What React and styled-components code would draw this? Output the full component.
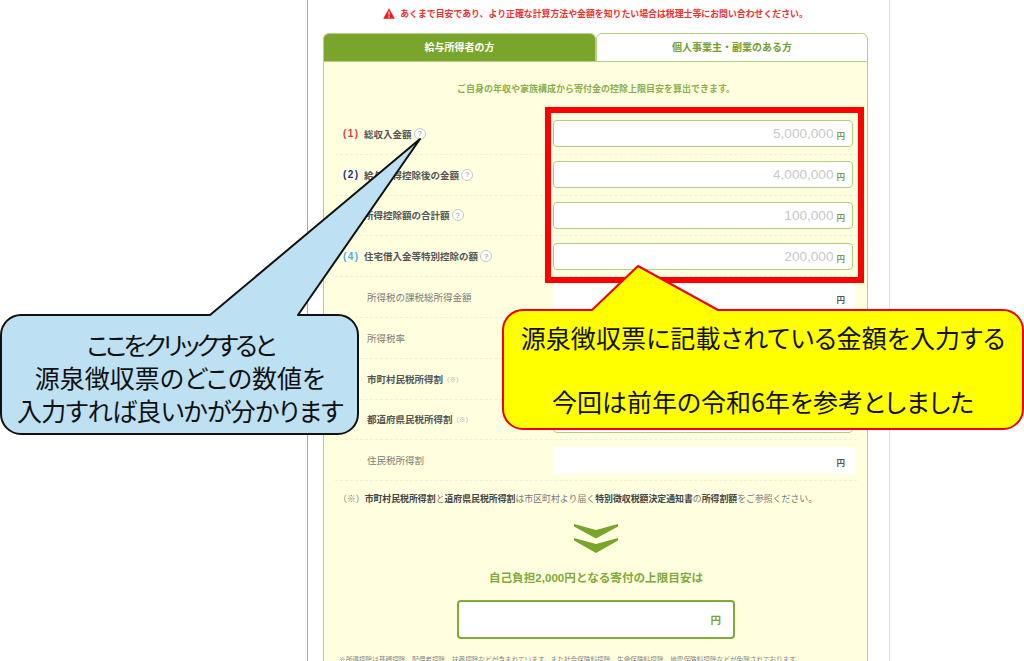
import React from "react";
import styled, { createGlobalStyle } from "styled-components";

const GlobalStyle = createGlobalStyle`
  html, body {
    margin: 0;
    padding: 0;
    background: #fff;
  }
  body {
    font-family: "Liberation Sans", "Noto Sans CJK JP", sans-serif;
  }
`;

const Page = styled.div`
  position: relative;
  width: 1024px;
  height: 661px;
  overflow: hidden;
  background: #fff;
`;

const Sheet = styled.div`
  box-sizing: border-box;
  width: 583px;
  height: 661px;
  margin-left: 307px;
  padding: 0 21px 0 15px;
  border-left: 1px solid #a8a8a8;
  border-right: 1px solid #e2e2e2;
  overflow: hidden;
`;

const Notice = styled.p`
  display: flex;
  align-items: center;
  justify-content: center;
  gap: 5px;
  height: 26px;
  margin: 0 0 7px;
  color: #f03030;
  font-size: 8.9px;
  font-weight: 700;
  white-space: nowrap;
`;

const Tabs = styled.div`
  display: flex;
  height: 29px;
`;

const Tab = styled.div`
  box-sizing: border-box;
  flex: ${(p) => (p.$active ? "0 0 273px" : "1")};
  display: flex;
  align-items: center;
  justify-content: center;
  padding-bottom: 2px;
  border: 1.5px solid ${(p) => (p.$active ? "#b5d48a" : "#aed080")};
  border-bottom-color: #aed080;
  border-radius: 6px 6px 0 0;
  background: ${(p) => (p.$active ? "#7aa52c" : "#fff")};
  color: ${(p) => (p.$active ? "#fff" : "#76a032")};
  font-size: 10px;
  font-weight: 700;
`;

const Panel = styled.div`
  box-sizing: border-box;
  height: 620px;
  padding: 0 10px 0 11px;
  border: 1.5px solid #aed080;
  border-top: 0;
  background: #ffffe0;
`;

const Intro = styled.p`
  height: 52px;
  margin: 0;
  padding-top: 21px;
  box-sizing: border-box;
  color: #8cae4c;
  font-size: 9px;
  font-weight: 700;
  line-height: 13px;
  text-align: center;
`;

const Row = styled.div`
  box-sizing: border-box;
  display: grid;
  grid-template-columns: 218px 302px;
  align-items: center;
  height: 40.8px;
  border-bottom: 1px dashed #eef3d2;
`;

const Label = styled.div`
  display: flex;
  align-items: center;
  padding-left: ${(p) => (p.$num ? "8px" : "32px")};
  color: ${(p) => (p.$plain ? "#7b7b7b" : "#555")};
  font-size: 9.5px;
  font-weight: ${(p) => (p.$plain ? 400 : 700)};
  white-space: nowrap;
`;

const Num = styled.span`
  width: 21px;
  color: ${(p) => p.$color};
  font-size: 10px;
  font-weight: 700;
  letter-spacing: 1.4px;
`;

const Help = styled.span`
  box-sizing: border-box;
  display: inline-flex;
  align-items: center;
  justify-content: center;
  width: 12px;
  height: 12px;
  margin-left: 2px;
  border: 1.5px solid #c6c6c6;
  border-radius: 50%;
  background: #fff;
  color: #8a8a8a;
  font-size: 7.5px;
  font-weight: 400;
`;

const Small = styled.span`
  color: #aaa;
  font-size: 6.5px;
  font-weight: 400;
`;

const Field = styled.div`
  box-sizing: border-box;
  display: flex;
  align-items: center;
  justify-content: flex-end;
  gap: 3px;
  width: ${(p) => (p.$bare ? "302px" : "300px")};
  height: 27px;
  padding-right: ${(p) => (p.$bare ? "10px" : "7px")};
  border: ${(p) => (p.$bare ? "0" : "1.5px solid #b2cd85")};
  border-radius: ${(p) => (p.$bare ? "0" : "4px")};
  background: #fff;
`;

const Amount = styled.span`
  color: #c8c8c8;
  font-size: 13.6px;
`;

const Yen = styled.span`
  color: ${(p) => (p.$dark ? "#555" : "#7d9c50")};
  font-size: 8.5px;
  font-weight: 700;
  padding-top: 3px;
`;

const Note = styled.p`
  margin: 0;
  padding: 12px 0 0 3px;
  color: #777;
  font-size: 8.9px;
  line-height: 12px;
  white-space: nowrap;

  b {
    color: #444;
  }
`;

const Chevrons = styled.svg`
  display: block;
  width: 44px;
  height: 29px;
  margin: 19px auto 0;
`;

const ResultTitle = styled.h3`
  margin: 18px 0 0;
  color: #80aa3a;
  font-size: 11.6px;
  font-weight: 700;
  line-height: 14px;
  text-align: center;
`;

const ResultBox = styled.div`
  box-sizing: border-box;
  display: flex;
  align-items: center;
  justify-content: flex-end;
  width: 278px;
  height: 39px;
  margin: 15px auto 0;
  padding-right: 12px;
  border: 2px solid #80aa3a;
  border-radius: 4px;
  background: #fff;
  color: #7aa52c;
  font-size: 10.5px;
  font-weight: 700;
`;

const Foot = styled.p`
  margin: 16px 0 0 4px;
  color: #888;
  font-size: 6.65px;
  line-height: 10px;
  white-space: nowrap;
`;

const RedFrame = styled.div`
  position: absolute;
  left: 545px;
  top: 107px;
  box-sizing: border-box;
  width: 319px;
  height: 176px;
  border: 6.5px solid #ff0000;
`;

const Callout = styled.div`
  position: absolute;
  left: 0;
  top: 0;
  width: 1024px;
  height: 661px;
  pointer-events: none;
`;

const Bubble = styled.svg`
  position: absolute;
  left: 0;
  top: 0;
`;

const BubbleText = styled.div`
  position: absolute;
  left: ${(p) => p.$left}px;
  top: ${(p) => p.$top}px;
  width: ${(p) => p.$width}px;
  color: #111;
  font-family: "Noto Sans CJK JP", sans-serif;
  font-size: 25px;
  font-feature-settings: "palt";
  text-align: center;
  white-space: nowrap;
`;

const BubbleLine = styled.div`
  height: ${(p) => p.$height}px;
  line-height: ${(p) => p.$height}px;
  letter-spacing: ${(p) => p.$spacing || 0}px;
`;

const rows = [
  { num: "(1)", color: "#e8383d", label: "総収入金額", help: true, amount: "5,000,000" },
  { num: "(2)", color: "#1d2f8f", label: "給与所得控除後の金額", help: true, amount: "4,000,000" },
  { num: "(3)", color: "#7aa52c", label: "所得控除額の合計額", help: true, amount: "100,000" },
  { num: "(4)", color: "#45b4ea", label: "住宅借入金等特別控除の額", help: true, amount: "200,000" },
  { label: "所得税の課税総所得金額", plain: true, bare: true },
  { label: "所得税率", plain: true, bare: true },
  { label: "市町村民税所得割", small: true },
  { label: "都道府県民税所得割", small: true },
  { label: "住民税所得割", plain: true, bare: true },
];

function Warning() {
  return (
    <svg width="12" height="11" viewBox="0 0 12 11">
      <path d="M6 0.3 L11.8 10.7 H0.2 Z" fill="#f01c1c" />
      <path d="M5.4 3.6 H6.6 L6.4 7.4 H5.6 Z M5.4 8.2 H6.6 V9.4 H5.4 Z" fill="#fff" />
    </svg>
  );
}

export default function App() {
  return (
    <Page>
      <GlobalStyle />
      <Sheet>
        <Notice>
          <Warning />
          あくまで目安であり、より正確な計算方法や金額を知りたい場合は税理士等にお問い合わせください。
        </Notice>
        <Tabs>
          <Tab $active>給与所得者の方</Tab>
          <Tab>個人事業主・副業のある方</Tab>
        </Tabs>
        <Panel>
          <Intro>ご自身の年収や家族構成から寄付金の控除上限目安を算出できます。</Intro>
          {rows.map((r) => (
            <Row key={r.label}>
              <Label $num={!!r.num} $plain={r.plain}>
                {r.num && <Num $color={r.color}>{r.num}</Num>}
                {r.label}
                {r.help && <Help>?</Help>}
                {r.small && <Small>（※）</Small>}
              </Label>
              <Field $bare={r.bare}>
                {r.amount && <Amount>{r.amount}</Amount>}
                <Yen $dark={r.bare}>円</Yen>
              </Field>
            </Row>
          ))}
          <Note>
            （※）<b>市町村民税所得割</b>と<b>道府県民税所得割</b>は市区町村より届く
            <b>特別徴収税額決定通知書</b>の<b>所得割額</b>をご参照ください。
          </Note>
          <Chevrons viewBox="0 0 44 29">
            <path d="M0 0 L22 6 L44 0 V2.5 L22 14.5 L0 2.5 Z" fill="#7aa52c" />
            <path d="M0 14 L22 20 L44 14 V16.5 L22 29 L0 16.5 Z" fill="#7aa52c" />
          </Chevrons>
          <ResultTitle>自己負担2,000円となる寄付の上限目安は</ResultTitle>
          <ResultBox>円</ResultBox>
          <Foot>
            ※所得控除は基礎控除、配偶者控除、扶養控除などが含まれています。また社会保険料控除、生命保険料控除、地震保険料控除などが免除されております。
          </Foot>
        </Panel>
      </Sheet>

      <RedFrame />

      <Callout>
        <Bubble width="1024" height="661" viewBox="0 0 1024 661">
          <path
            d="M21 315 H210 L420 139 L298 315 H338 A20 20 0 0 1 358 335 V414 A20 20 0 0 1 338 434 H21 A20 20 0 0 1 1 414 V335 A20 20 0 0 1 21 315 Z"
            fill="#bde0f3"
            stroke="#111"
            strokeWidth="2"
            strokeLinejoin="round"
          />
          <path
            d="M523 310 H592 L638 266 L718 310 H1003 A20 20 0 0 1 1023 330 V409 A20 20 0 0 1 1003 429 H523 A20 20 0 0 1 503 409 V330 A20 20 0 0 1 523 310 Z"
            fill="#ffff00"
            stroke="#f00000"
            strokeWidth="2"
            strokeLinejoin="round"
          />
        </Bubble>
        <BubbleText $left={1} $top={328} $width={358}>
          <BubbleLine $height={33} $spacing={-3.2}>ここをクリックすると</BubbleLine>
          <BubbleLine $height={33}>源泉徴収票のどこの数値を</BubbleLine>
          <BubbleLine $height={33} $spacing={-0.7}>入力すれば良いかが分かります</BubbleLine>
        </BubbleText>
        <BubbleText $left={503} $top={321} $width={520}>
          <BubbleLine $height={32} $spacing={0.1}>源泉徴収票に記載されている金額を入力する</BubbleLine>
          <BubbleLine $height={32} />
          <BubbleLine $height={32}>今回は前年の令和6年を参考としました</BubbleLine>
        </BubbleText>
      </Callout>
    </Page>
  );
}
